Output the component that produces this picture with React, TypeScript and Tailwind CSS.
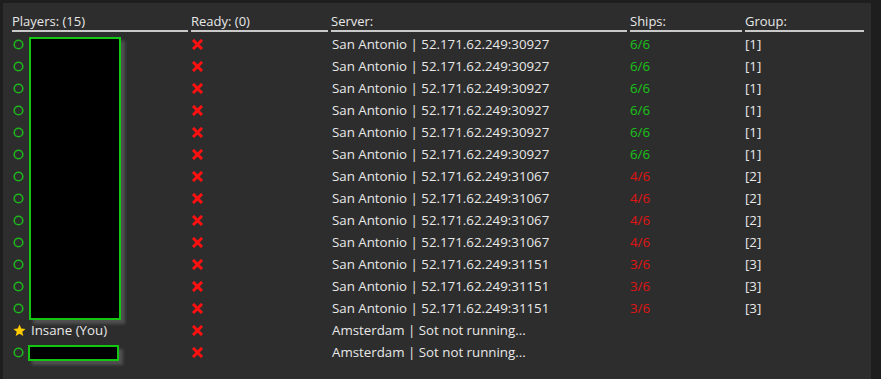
import React from 'react';

type Row = {
  server: string;
  ships?: string;
  shipsOk?: boolean;
  group?: string;
  me?: boolean;
};

const rows: Row[] = [
  ...Array.from({ length: 6 }, () => ({ server: 'San Antonio | 52.171.62.249:30927', ships: '6/6', shipsOk: true, group: '[1]' })),
  ...Array.from({ length: 4 }, () => ({ server: 'San Antonio | 52.171.62.249:31067', ships: '4/6', shipsOk: false, group: '[2]' })),
  ...Array.from({ length: 3 }, () => ({ server: 'San Antonio | 52.171.62.249:31151', ships: '3/6', shipsOk: false, group: '[3]' })),
  { server: 'Amsterdam | Sot not running...', me: true },
  { server: 'Amsterdam | Sot not running...' },
];

const cols = [
  { label: 'Players: (15)', w: 'w-[179px]' },
  { label: 'Ready: (0)', w: 'w-[140px]' },
  { label: 'Server:', w: 'w-[299px]' },
  { label: 'Ships:', w: 'w-[115px]' },
  { label: 'Group:', w: 'w-[122px]' },
];

function Ring() {
  return (
    <svg width="11" height="11" viewBox="0 0 11 11" className="shrink-0">
      <circle cx="5.5" cy="5.5" r="4.3" fill="none" stroke="#1fb51f" strokeWidth="1.6" />
    </svg>
  );
}

function Star() {
  return (
    <svg width="13" height="13" viewBox="0 0 24 24" className="shrink-0">
      <path d="M12 1l3.2 7.4 8 .7-6.1 5.3 1.9 7.9L12 18.1 5 22.3l1.9-7.9L.8 9.1l8-.7z" fill="#ffcc00" />
    </svg>
  );
}

function Cross() {
  return (
    <svg width="11" height="11" viewBox="0 0 11 11">
      <path d="M2 2l7 7M9 2l-7 7" stroke="#ff1010" strokeWidth="3" strokeLinecap="square" />
    </svg>
  );
}

export default function App() {
  return (
    <div className="w-[881px] h-[379px] bg-[#1e1e1e] pt-[3px] pl-[3px] overflow-hidden" style={{ fontFamily: '"Open Sans", "Noto Sans", sans-serif' }}>
      <div className="relative w-[868px] h-full bg-[#2d2d2d] pl-[9px] pt-[9px] text-[#e8e8e8]">
        <div className="flex text-[13px]">
          {cols.map((c) => (
            <div key={c.label} className={`${c.w} pr-[3px]`}>
              <div className="h-[18px] leading-[18px]">{c.label}</div>
              <div className="h-[2px] bg-[#c9c9c9]" />
            </div>
          ))}
        </div>
        <div className="pt-[1px] text-[13.3px]">
          {rows.map((r, i) => (
            <div key={i} className="flex h-[22px] items-center leading-[22px]">
              <div className="w-[179px] flex items-center gap-[5px] pl-[1px]">
                {r.me ? <Star /> : <Ring />}
                {r.me && <span>Insane (You)</span>}
              </div>
              <div className="w-[140px] pl-[1px] flex items-center">
                <Cross />
              </div>
              <div className="w-[299px] pl-[1px]">{r.server}</div>
              <div className={`w-[115px] ${r.shipsOk ? 'text-[#19c419]' : 'text-[#e01414]'}`}>{r.ships}</div>
              <div className="w-[122px]">{r.group}</div>
            </div>
          ))}
        </div>

        <div className="absolute left-[26px] top-[34px] w-[92px] h-[283px] bg-black border-2 border-[#12c612] shadow-[4px_4px_3px_rgba(110,110,110,0.55)]" />
        <div className="absolute left-[25px] top-[342px] w-[91px] h-[16px] bg-black border-2 border-[#12c612] shadow-[4px_4px_3px_rgba(110,110,110,0.55)]" />
      </div>
    </div>
  );
}
